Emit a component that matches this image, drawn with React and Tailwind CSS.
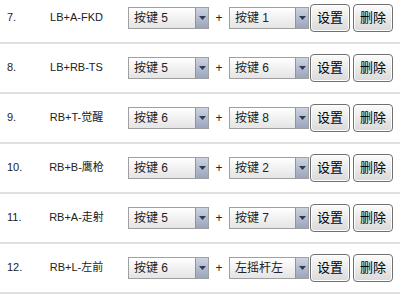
const rows = [
  { n: "7.", label: "LB+A-FKD", a: "按键 5", b: "按键 1" },
  { n: "8.", label: "LB+RB-TS", a: "按键 5", b: "按键 6" },
  { n: "9.", label: "RB+T-觉醒", a: "按键 6", b: "按键 8" },
  { n: "10.", label: "RB+B-鹰枪", a: "按键 6", b: "按键 2" },
  { n: "11.", label: "RB+A-走射", a: "按键 5", b: "按键 7" },
  { n: "12.", label: "RB+L-左前", a: "按键 6", b: "左摇杆左" },
];

const font = { fontFamily: '"Liberation Sans", "Noto Sans CJK SC", sans-serif' };

function Select({ value, className = "" }) {
  return (
    <div
      className={`flex h-[22px] border border-[#a0a0a0] bg-gradient-to-b from-[#ffffff] to-[#e4e4e4] ${className}`}
    >
      <span className="flex-1 pl-[5px] text-[12px] leading-[20px] text-[#222]">{value}</span>
      <span className="flex w-[13px] items-center justify-center border-l border-[#8a93aa] bg-gradient-to-b from-[#cdd3df] to-[#9ba5bc]">
        <svg width="7" height="4" viewBox="0 0 7 4">
          <path d="M0 0h7L3.5 4z" fill="#2f3a55" />
        </svg>
      </span>
    </div>
  );
}

function Button({ children }) {
  return (
    <button className="h-[28px] w-[40px] rounded-[4px] border border-[#707070] bg-gradient-to-b from-[#fbfbfb] to-[#d9d9d9] text-[13px] text-black shadow-[inset_0_0_0_1px_#ffffff]">
      {children}
    </button>
  );
}

export default function App() {
  return (
    <div className="h-[298px] w-[400px] overflow-hidden bg-white" style={font}>
      <div className="-mt-[6px]">
        {rows.map((r) => (
          <div
            key={r.n}
            className="flex h-[50px] items-center border-b-2 border-[#e0e0e0] pb-[1px]"
          >
            <span className="w-[25px] pl-[7px] text-[11px] text-[#222]">{r.n}</span>
            <span className="w-[103px] text-center text-[11px] text-[#222]">{r.label}</span>
            <Select value={r.a} className="w-[81px]" />
            <span className="w-[20px] text-center text-[12px] text-[#222]">+</span>
            <Select value={r.b} className="w-[80px]" />
            <div className="ml-[1px] flex gap-[3px]">
              <Button>设置</Button>
              <Button>删除</Button>
            </div>
          </div>
        ))}
      </div>
    </div>
  );
}
